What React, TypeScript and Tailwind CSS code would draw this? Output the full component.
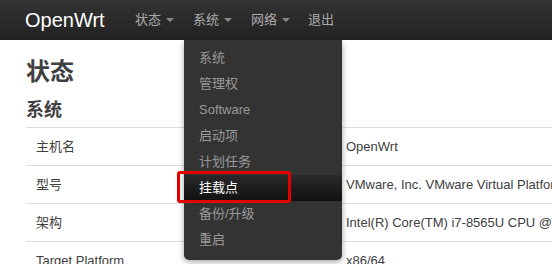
import React from 'react';

const font = { fontFamily: '"Liberation Sans", "Noto Sans CJK SC", sans-serif' };

const Caret = () => (
  <span className="inline-block ml-[5px] align-middle w-0 h-0 border-l-[4px] border-r-[4px] border-t-[4px] border-l-transparent border-r-transparent border-t-[#888]" />
);

const menu = ['系统', '管理权', 'Software', '启动项', '计划任务', '挂载点', '备份/升级', '重启'];

const rows: [string, string][] = [
  ['主机名', 'OpenWrt'],
  ['型号', 'VMware, Inc. VMware Virtual Platform'],
  ['架构', 'Intel(R) Core(TM) i7-8565U CPU @ 1.80GHz'],
  ['Target Platform', 'x86/64'],
];

const App: React.FC = () => {
  return (
    <div className="relative w-[552px] h-[264px] overflow-hidden bg-white" style={font}>
      {/* Top navbar */}
      <div className="h-10 w-full bg-gradient-to-b from-[#333] to-[#222] flex items-center">
        <div className="pl-[25px] w-[128px] text-white text-[20px] leading-none">OpenWrt</div>
        <ul className="flex items-center text-[13px] text-[#aaa] pl-[7px]">
          <li className="w-[58px] flex items-center">状态<Caret /></li>
          <li className="w-[58px] flex items-center">系统<Caret /></li>
          <li className="w-[57px] flex items-center">网络<Caret /></li>
          <li>退出</li>
        </ul>
      </div>

      {/* Page content */}
      <div className="pl-[26px]">
        <h2 className="text-[24px] font-bold text-[#404040] leading-none mt-[20px]">状态</h2>
        <h3 className="text-[18px] font-bold text-[#404040] leading-none mt-[17px] mb-[8px]">系统</h3>
        <div className="border-t border-[#ddd] text-[13px] text-[#404040]">
          {rows.map(([k, v]) => (
            <div key={k} className="flex h-[38px] items-center border-b border-[#ddd] whitespace-nowrap">
              <div className="w-[320px] shrink-0 pl-[10px]">{k}</div>
              <div className="shrink-0">{v}</div>
            </div>
          ))}
        </div>
      </div>

      {/* Dropdown menu */}
      <ul className="absolute left-[184px] top-[40px] w-[158px] bg-[#333] rounded-b-[5px] pt-[5px] pb-[7px] shadow-[0_2px_6px_rgba(0,0,0,0.35)] text-[13px]">
        {menu.map((m) => (
          <li
            key={m}
            className={
              m === '挂载点'
                ? 'h-[26px] flex items-center pl-[15px] text-white bg-gradient-to-b from-[#2a2a2a] to-[#111]'
                : 'h-[26px] flex items-center pl-[15px] text-[#999]'
            }
          >
            {m}
          </li>
        ))}
      </ul>

      {/* Highlight annotation */}
      <div className="absolute left-[177px] top-[171px] w-[114px] h-[32px] border-[3px] border-[#e50000] rounded-[3px]" />
    </div>
  );
};

export default App;
